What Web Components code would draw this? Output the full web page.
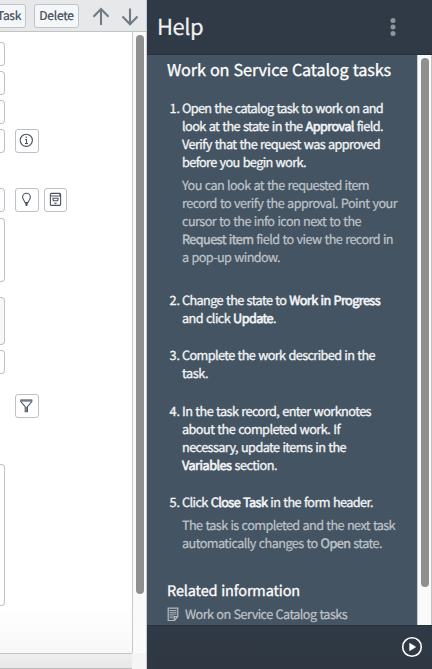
<!DOCTYPE html>
<html lang="en">
<head>
<meta charset="utf-8">
<title>Help</title>
<style>
html,body{margin:0;height:100%;overflow:hidden}
body{font-family:"Noto Sans CJK SC","Noto Sans CJK JP","Open Sans",sans-serif;font-weight:400;text-rendering:geometricPrecision}
</style>
</head>
<body>
<app-shell></app-shell>
<script>
function define(name, html, setup) {
  const t = document.createElement('template');
  t.innerHTML = html;
  customElements.define(name, class extends HTMLElement {
    connectedCallback() {
      if (this.shadowRoot) return;
      this.attachShadow({mode: 'open'}).append(t.content.cloneNode(true));
      if (setup) setup(this, this.shadowRoot);
    }
  });
}

// One line of copy, tracked so that it fills the measure given by "w".
define('text-line', `<style>:host{display:block;white-space:nowrap}span{display:inline-block}</style><span><slot></slot></span>`, (el, root) => {
  const span = root.querySelector('span');
  const w = +el.getAttribute('w');
  const n = el.textContent.length;
  const natural = span.getBoundingClientRect().width;
  if (w && natural) span.style.letterSpacing = ((w - natural) / n) + 'px';
});

define('tool-button', `<style>:host{display:flex;box-sizing:border-box;height:24px;border:1px solid #bfc4ca;border-radius:3px;background:#f5f6f7;color:#3b4754;font-size:12px;line-height:22px;align-items:center;justify-content:center;-webkit-text-stroke:.2px;flex:none}</style><slot></slot>`);

define('icon-button', `<style>:host{display:flex;box-sizing:border-box;width:24px;height:24px;border:1px solid #bcc1c7;border-radius:3px;background:#fff;align-items:center;justify-content:center;flex:none}svg{display:block;fill:none;stroke:#48535f;stroke-width:1.1}</style><svg width="16" height="16" viewBox="0 0 16 16"></svg>`, (el, root) => {
  root.querySelector('svg').innerHTML = {
    info: '<circle cx="7.3" cy="7.3" r="6.1"/><path d="M6.2 6.500h1.300v4M6 10.500h3"/><circle cx="7.300" cy="4.300" r=".8" fill="#48535f" stroke="none"/>',
    bulb: '<path d="M6 10.5C5.8 8.7 3.6 7.8 3.6 5.1a3.9 3.9 0 0 1 7.8 0c0 2.7-2.2 3.6-2.4 5.4z"/><path d="M6.2 11.8h2.6M6.6 13.2h1.8" stroke-width="1.4"/>',
    book: '<rect x="2.4" y="1.4" width="10.2" height="12" rx="1"/><path d="M2.4 4h10.2M12 1.5v2.5"/><path d="M5 6.2h5v1.6q0 1-1 1H6q-1 0-1-1z"/><path d="M6.3 10.9h2.4l-1.2 1z" fill="#48535f" stroke-width=".4"/>',
    filter: '<path d="M1.8 2h11v1.6L8.4 8.700v5H6.200v-5L1.800 3.600z"/><path d="M1.800 2.700h11" stroke="#727c86" stroke-width="2"/><path d="M7.300 9v4.700" stroke="#727c86" stroke-width="1.400"/>'
  }[el.getAttribute('icon')];
});

define('field-edge', `<style>:host{display:block;box-sizing:border-box;width:5px;height:24px;border:1px solid #bcc1ca;border-left:0;border-radius:0 4px 4px 0;background:#fff;flex:none}</style>`);

define('scroll-bar', `<style>:host{display:block;box-sizing:border-box;background:#fafafa}i{display:block;width:8px;background:#8f8f8f;border-radius:4px}</style><i></i>`, (el, root) => {
  root.querySelector('i').style.height = el.getAttribute('size') + 'px';
});

define('form-pane', `<style>
:host{display:grid;grid-template-rows:32px 1fr 16px;background:#fff;height:669px;border-right:1px solid #c9ccd0;box-sizing:border-box;overflow:hidden}
header{display:flex;background:#e6e8ea;border-bottom:1px solid #c1c4c7;padding-top:4px;box-sizing:border-box;align-items:flex-start}
header svg{display:block;fill:none;stroke:#727a83;stroke-width:2.1;flex:none;margin-top:3px}
.task{width:36px;margin-left:-10px;border-radius:3px;justify-content:flex-end;padding-right:4px}
.del{width:45px;margin:0 12px 0 8px}
.mid{display:grid;grid-template-columns:133px 13px;min-height:0}
.form{display:flex;flex-direction:column;background:linear-gradient(#fff 92%,#f8f8f8);border-right:1px solid #c8c9ca}
.row{display:flex;align-items:flex-start}
.row icon-button{margin-left:10px}.row icon-button+icon-button{margin-left:5px;width:23px}
scroll-bar{padding:3px 0 0 3px}
footer{background:linear-gradient(90deg,transparent 132px,#f5f5f5 132px),linear-gradient(#c5c5c5 1px,#efefef 1px,#e8e8e8 15px,#b9b9b9 15px)}
</style>
<header><tool-button class="task"><text-line w="24">Task</text-line></tool-button><tool-button class="del"><text-line w="34.500">Delete</text-line></tool-button>
<svg width="20" height="20" viewBox="0 0 20 20"><path d="M10 18V2.500M2.500 9.700L10 2l7.500 7.700"/></svg>
<svg width="20" height="20" viewBox="0 0 20 20" style="margin-left:9px"><path d="M10 1.500V17M2.500 9.500L10 17.200l7.500-7.700"/></svg></header>
<div class="mid"><div class="form">
<field-edge style="margin-top:10px"></field-edge>
<field-edge style="margin-top:5px"></field-edge>
<field-edge style="margin-top:5px"></field-edge>
<div class="row" style="margin-top:5px"><field-edge></field-edge><icon-button icon="info"></icon-button></div>
<div class="row" style="margin-top:35px"><field-edge></field-edge><icon-button icon="bulb"></icon-button><icon-button icon="book"></icon-button></div>
<field-edge style="margin-top:6px;height:64px"></field-edge>
<field-edge style="margin-top:15px;height:48px;background:#f8f8fa"></field-edge>
<field-edge style="margin-top:5px"></field-edge>
<div class="row" style="margin:20px 0 0 5px"><icon-button icon="filter"></icon-button></div>
<field-edge style="margin-top:46px;height:142px"></field-edge>
</div><scroll-bar size="559"></scroll-bar></div>
<footer></footer>`);

define('help-step', `<style>
:host{display:grid;grid-template-columns:15px 1fr;color:#f3f5f6}
.n{grid-column:1;white-space:nowrap;margin-left:2.500px}.c{grid-column:2}
::slotted([slot=note]){margin-top:5px;color:#bec3c9;-webkit-text-stroke:.2px}
</style><span class="n"></span><div class="c"><slot></slot><slot name="note"></slot></div>`, (el, root) => {
  root.querySelector('.n').textContent = el.getAttribute('n') + '.';
});

define('help-pane', `<style>
:host{display:grid;grid-template-rows:55px 570px 44px;height:669px;background:#455463;overflow:hidden}
header{display:flex;align-items:center;justify-content:space-between;background:#303a46;padding:0 36px 0 10px;box-sizing:border-box;border-bottom:1px solid #28313b;font-size:22px;color:#f0f1f2;line-height:54px}
header text-line{margin-top:-2px;-webkit-text-stroke:.15px}
header svg{display:block}
.mid{display:grid;grid-template-columns:270px 15px;overflow:hidden}
article{padding-left:20px;overflow:hidden;font-size:12.700px;line-height:18px;word-spacing:.7px;-webkit-text-stroke:.3px}
h2{margin:2px 0 0;font-size:16.300px;line-height:24px;font-weight:400;color:#fff}
ol{margin:18px 0 0;padding:0;display:block}
h3{margin:28px 0 0;font-size:14.500px;line-height:22px;font-weight:400;color:#fff}
.link{display:flex;align-items:center;gap:6px;color:#bec3c9;-webkit-text-stroke:.2px;margin-top:3px;line-height:18px}
.link svg{display:block}
scroll-bar{padding:3px 0 0 3px;border-left:1px solid #c8ccd0;border-right:1px solid #c2c2c2}
footer{background:linear-gradient(#303a46,#2e3742);border-top:1px solid #28313b;display:flex;justify-content:flex-end;padding:10px 9.500px 0 0;box-sizing:border-box}
help-step+help-step{margin-top:19px}
b{font-weight:400;-webkit-text-stroke:.6px}
div[slot] b{-webkit-text-stroke:.45px}
</style>
<header><text-line w="46">Help</text-line><svg width="6" height="20" viewBox="0 0 6 20" fill="#8e959c"><circle cx="3" cy="3.500" r="2.500"/><circle cx="3" cy="10" r="2.500"/><circle cx="3" cy="16.500" r="2.500"/></svg></header>
<div class="mid"><article>
<h2><text-line w="224">Work on Service Catalog tasks</text-line></h2>
<ol>
<help-step n="1"><text-line w="201">Open the catalog task to work on and</text-line><text-line w="201">look at the state in the <b>Approval</b> field.</text-line><text-line w="198">Verify that the request was approved</text-line><text-line w="124">before you begin work.</text-line>
<div slot="note"><text-line w="187">You can look at the requested item</text-line><text-line w="215">record to verify the approval. Point your</text-line><text-line w="179">cursor to the info icon next to the</text-line><text-line w="211"><b>Request item</b> field to view the record in</text-line><text-line w="98">a pop-up window.</text-line></div></help-step>
<help-step n="2" style="margin-top:25px"><text-line w="198">Change the state to <b>Work in Progress</b></text-line><text-line w="94">and click <b>Update</b>.</text-line></help-step>
<help-step n="3"><text-line w="193">Complete the work described in the</text-line><text-line w="26">task.</text-line></help-step>
<help-step n="4" style="margin-top:20px"><text-line w="189">In the task record, enter worknotes</text-line><text-line w="158">about the completed work. If</text-line><text-line w="164">necessary, update items in the</text-line><text-line w="95"><b>Variables</b> section.</text-line></help-step>
<help-step n="5"><text-line w="191">Click <b>Close Task</b> in the form header.</text-line>
<div slot="note"><text-line w="213">The task is completed and the next task</text-line><text-line w="200">automatically changes to <b>Open</b> state.</text-line></div></help-step>
</ol>
<h3><text-line w="133">Related information</text-line></h3>
<div class="link"><svg width="12" height="15" viewBox="0 0 12 15" fill="none" stroke="#b4bac1" stroke-width="1.200"><path d="M1.200 1.200h9.600v8.300L7.500 13.500H1.200z"/><path d="M7.300 13.300V9.700h3.300"/><path d="M2.500 3.500h7M2.500 5.300h7M2.500 7.100h7M2.500 9h4.500M2.500 10.800h4" stroke-width=".9"/></svg><text-line w="162">Work on Service Catalog tasks</text-line></div>
</article><scroll-bar size="529"></scroll-bar></div>
<footer><svg width="22" height="22" viewBox="0 0 22 22"><circle cx="11" cy="11" r="9.300" fill="none" stroke="#fff" stroke-width="1.600"/><path d="M8.700 7.300v7.400l6-3.700z" fill="#fff" stroke="#fff" stroke-width=".6" stroke-linejoin="round"/></svg></footer>`);

define('app-shell', `<style>:host{display:grid;grid-template-columns:147px 285px;width:432px;height:669px}</style><form-pane></form-pane><help-pane></help-pane>`);
</script>
</body>
</html>
